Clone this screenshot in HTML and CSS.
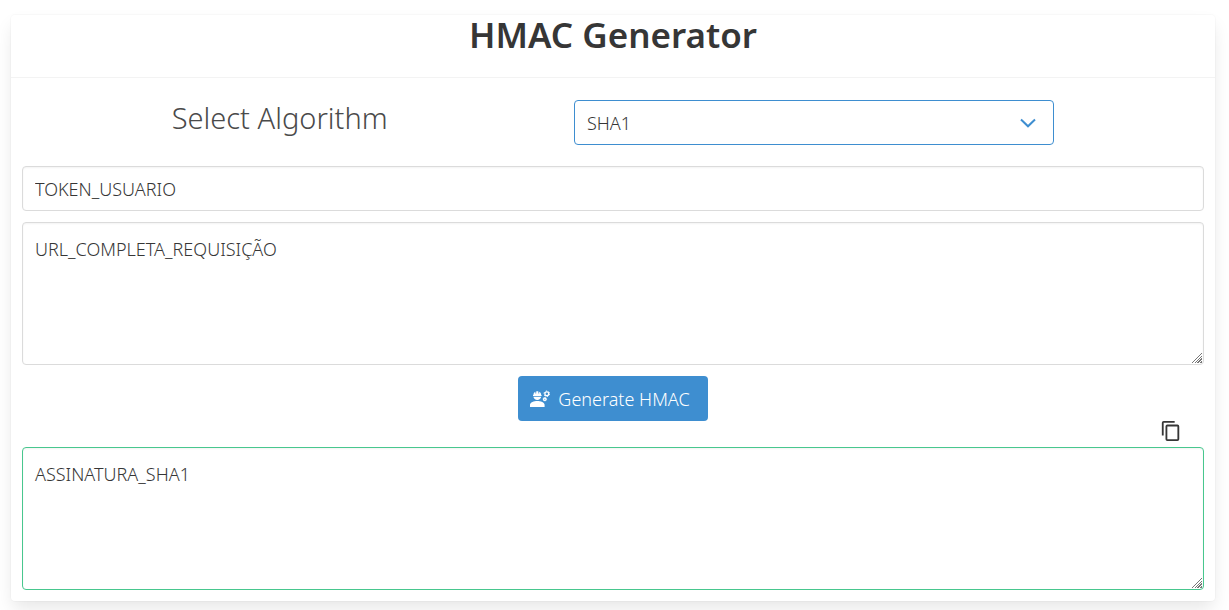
FILE: index.html
```html
<!DOCTYPE html>
<html lang="en">
<head>
<meta charset="utf-8">
<meta name="viewport" content="width=device-width, initial-scale=1">
<title>HMAC Generator</title>
<link rel="stylesheet" href="styles.css">
</head>
<body>
<main class="card">
  <header class="card-header">
    <h1 class="title">HMAC Generator</h1>
  </header>
  <form class="card-content">
    <div class="algorithm">
      <label class="algorithm-label" for="algorithm">Select Algorithm</label>
      <div class="select">
        <select class="field" id="algorithm">
          <option>SHA1</option>
          <option>SHA256</option>
          <option>SHA512</option>
        </select>
        <svg class="chevron" viewBox="0 0 18 12" aria-hidden="true"><path d="M2 2.500 9 9.300l7-6.800"/></svg>
      </div>
    </div>
    <input class="field" type="text" aria-label="Secret key" value="TOKEN_USUARIO">
    <textarea class="field area" aria-label="Message" spellcheck="false">URL_COMPLETA_REQUISIÇÃO</textarea>
    <button class="button" type="button">
      <svg class="button-icon" viewBox="0 0 20 18" aria-hidden="true">
        <path fill="currentColor" d="M0 17v-2.200c0-2.600 4-3.900 7.300-3.900s7.300 1.300 7.300 3.900V17zM3.400 6.800h7.800c-.3 1.900-1.900 3.300-3.900 3.300S3.700 8.700 3.400 6.800zM3 5.900v-.8h.4c0-1.500.8-2.700 2-3.300v1.700h.8V1.400c.7-.2 1.500-.2 2.200 0v2.100h.8V1.800c1.200.6 2 1.800 2 3.300h.4v.8z"/>
        <circle class="gear" cx="16.800" cy="3.800" r="1.900"/>
        <circle class="gear-teeth" cx="16.800" cy="3.800" r="2.800"/>
        <circle class="gear" cx="14.800" cy="9.200" r="1.200"/>
        <circle class="gear-teeth small" cx="14.800" cy="9.200" r="1.800"/>
      </svg>
      <span>Generate HMAC</span>
    </button>
    <div class="result">
      <button class="copy" type="button" aria-label="Copy">
        <svg class="copy-icon" viewBox="0 0 24 24" aria-hidden="true"><path fill="currentColor" d="M19 21H8V7h11m0-2H8a2 2 0 0 0-2 2v14a2 2 0 0 0 2 2h11a2 2 0 0 0 2-2V7a2 2 0 0 0-2-2m-3-4H4a2 2 0 0 0-2 2v14h2V3h12z"/></svg>
      </button>
      <textarea class="field area success" aria-label="Signature" spellcheck="false">ASSINATURA_SHA1</textarea>
    </div>
  </form>
</main>
</body>
</html>
```
FILE: styles.css
```css
* {
  box-sizing: border-box;
}

body {
  margin: 0;
  padding: 15px 14px 9px 11px;
  background: #fff;
  color: #363636;
  font-family: "Noto Sans", "Open Sans", sans-serif;
  font-size: 18px;
  font-weight: 350;
}

.card {
  background: #fff;
  border-radius: 4px;
  box-shadow: 0 9px 18px -2px rgba(10, 10, 10, 0.1), 0 0 0 1px rgba(10, 10, 10, 0.02);
}

.card-header {
  padding-bottom: 22px;
  border-bottom: 1px solid #f3f3f3;
}

.title {
  margin: 0;
  font-size: 35px;
  font-weight: 600;
  line-height: 40px;
  text-align: center;
}

.card-content {
  display: flex;
  flex-direction: column;
  gap: 11px;
  padding: 22px 11px 11px;
}

.algorithm {
  display: grid;
  grid-template-columns: 43.6% 40.6%;
  column-gap: 3.1%;
  margin-bottom: 10px;
}

.algorithm-label {
  color: #4a4a4a;
  font-size: 29px;
  font-weight: 300;
  line-height: 36px;
  text-align: center;
}

.select {
  display: grid;
  align-items: center;
}

.select > * {
  grid-area: 1 / 1;
}

.select .field {
  border-color: #3e8ed0;
  box-shadow: none;
}

.chevron {
  justify-self: end;
  width: 18px;
  height: 12px;
  margin-right: 17px;
  fill: none;
  stroke: #3e8ed0;
  stroke-width: 2;
  pointer-events: none;
}

.field {
  display: block;
  width: 100%;
  height: 45px;
  padding: 8px 12px;
  border: 1px solid #dbdbdb;
  border-radius: 4px;
  background: #fff;
  box-shadow: inset 0 1px 2px rgba(10, 10, 10, 0.05);
  color: #363636;
  font: inherit;
  line-height: 26px;
  appearance: none;
}

.area {
  height: 143px;
  padding: 13px 12px;
  resize: vertical;
}

.area::-webkit-resizer {
  background: linear-gradient(135deg, #fff 52%, transparent 52%), repeating-linear-gradient(135deg, #777 0 1px, #fff 1px 2px);
  background-position: right 1px bottom 1px;
  background-repeat: no-repeat;
  background-size: 11px 11px;
}

.success {
  border-color: #48c78e;
}

.button {
  display: flex;
  align-self: center;
  align-items: center;
  gap: 8px;
  height: 45px;
  padding: 0 18px 0 12px;
  border: 0;
  border-radius: 4px;
  background: #3e8ed0;
  color: #fff;
  font: inherit;
  font-weight: 300;
}

.button-icon {
  width: 20px;
  height: 18px;
}

.gear,
.gear-teeth {
  fill: none;
  stroke: currentColor;
  stroke-width: 1.3;
}

.gear-teeth {
  stroke-width: 1;
  stroke-dasharray: 1.47;
}

.gear-teeth.small {
  stroke-width: 0.6;
  stroke-dasharray: 0.94;
}

.result {
  display: flex;
  flex-direction: column;
  gap: 5px;
  margin-top: -12px;
}

.copy {
  align-self: flex-end;
  margin-right: 22px;
  padding: 0;
  border: 0;
  background: none;
  color: #363636;
}

.copy-icon {
  display: block;
  width: 22px;
  height: 22px;
}
```
